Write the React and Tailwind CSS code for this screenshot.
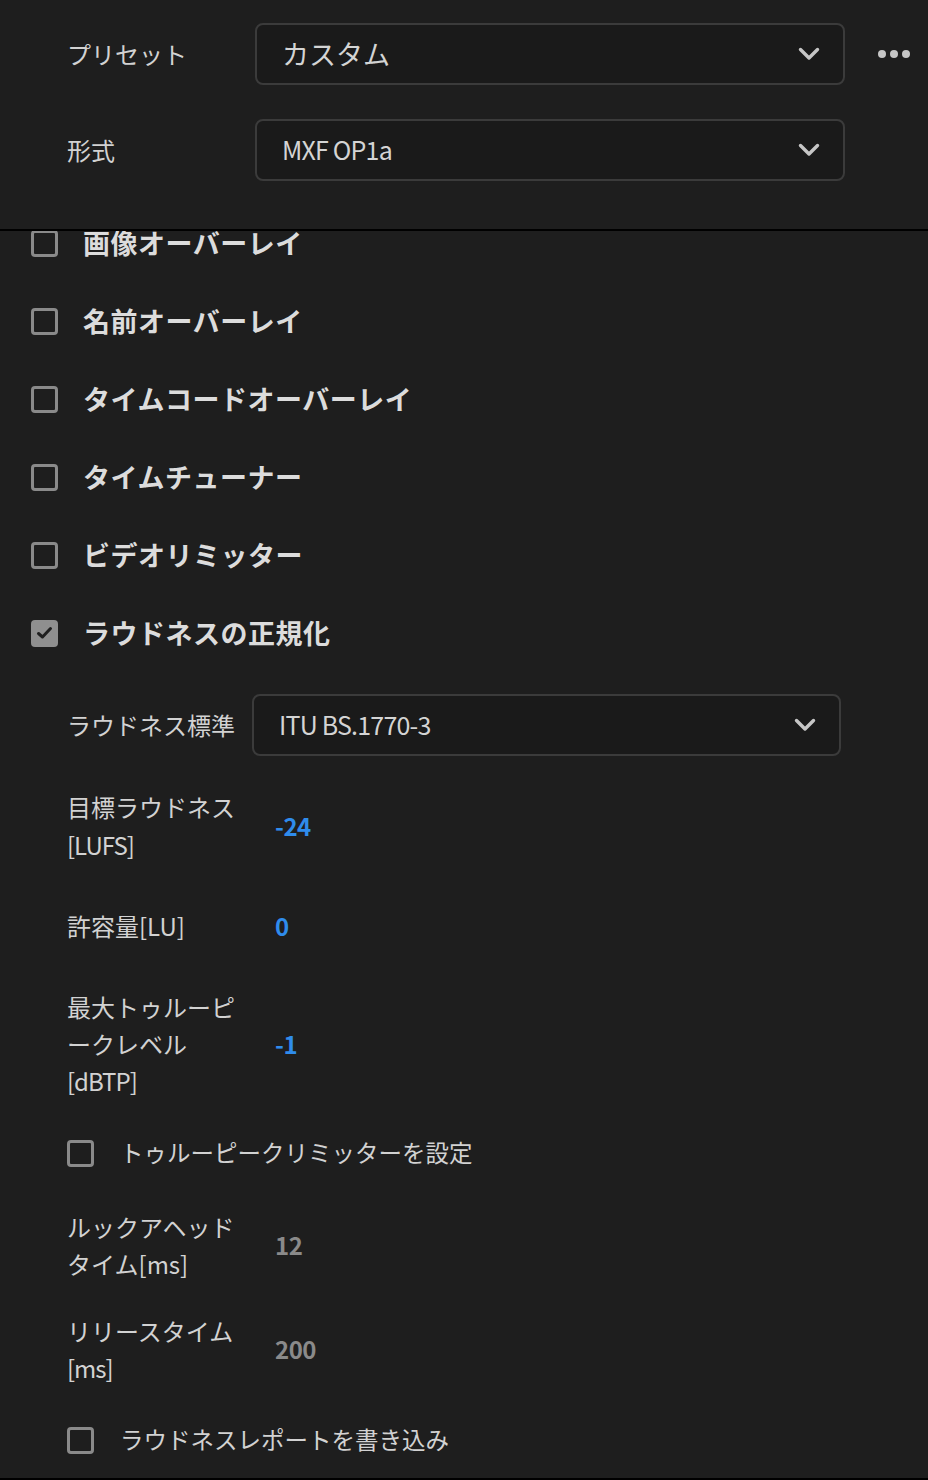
import React from 'react';

const FONT = { fontFamily: '"Noto Sans CJK JP", "Noto Sans", sans-serif' };

const Chevron = () => (
  <svg width="22" height="14" viewBox="0 0 22 14" className="shrink-0">
    <path d="M2.5 2.5 L11 11 L19.5 2.5" fill="none" stroke="#c6c6c6" strokeWidth="3.4" strokeLinecap="round" strokeLinejoin="round" />
  </svg>
);

const Dropdown = ({ value, big }) => (
  <div className="flex-1 h-[62px] flex items-center justify-between pl-[25px] pr-[23px] bg-[#1a1a1a] border-2 border-[#3b3b3b] rounded-[8px]">
    <span className={big ? 'text-[27px] text-[#d4d4d4]' : 'text-[25px] text-[#d4d4d4] tracking-[-0.8px]'}>{value}</span>
    <Chevron />
  </div>
);

const Box = ({ checked }) =>
  checked ? (
    <div className="w-[27px] h-[27px] shrink-0 rounded-[4px] bg-[#8f8f8f] flex items-center justify-center">
      <svg width="17" height="14" viewBox="0 0 17 14">
        <path d="M2.5 7.5 L6.5 11 L14.5 2.5" fill="none" stroke="#1f1f1f" strokeWidth="3" strokeLinecap="round" strokeLinejoin="round" />
      </svg>
    </div>
  ) : (
    <div className="w-[27px] h-[27px] shrink-0 rounded-[4px] border-[3px] border-[#8a8a8a]" />
  );

const MainCheck = ({ label, checked }) => (
  <div className="h-[78px] flex items-center pl-[31px]">
    <Box checked={checked} />
    <span className="ml-[25px] text-[27px] font-bold text-[#dcdcdc] tracking-[0.5px]">{label}</span>
  </div>
);

const SubCheck = ({ label, className }) => (
  <div className={`h-[38px] flex items-center ${className}`}>
    <Box />
    <span className="ml-[26px] text-[23.5px] text-[#d2d2d2]">{label}</span>
  </div>
);

const Field = ({ lines, value, blue, className, lh }) => (
  <div className={`flex items-center ${className}`}>
    <div className={`w-[185px] shrink-0 text-[24px] text-[#d2d2d2] ${lh}`}>
      {lines.map((l) => (
        <div key={l} className={l.startsWith('[') ? 'tracking-[-1px]' : ''}>
          {l}
        </div>
      ))}
    </div>
    <span className={`pl-[23px] text-[24px] font-bold tracking-[-0.5px] ${blue ? 'text-[#2f8cec]' : 'text-[#8a8a8a]'}`}>{value}</span>
  </div>
);

export default function App() {
  return (
    <div className="w-full h-[1480px] bg-[#1e1e1e] flex flex-col overflow-hidden" style={FONT}>
      {/* header */}
      <div className="h-[231px] shrink-0 border-b-2 border-black pt-[23px] pl-[67px] flex flex-col gap-[34px]">
        <div className="flex items-center">
          <span className="w-[188px] shrink-0 text-[24px] text-[#d2d2d2]">プリセット</span>
          <div className="w-[590px] flex">
            <Dropdown value="カスタム" big />
          </div>
          <div className="ml-[33px] flex gap-[4px]">
            <span className="w-[8px] h-[8px] rounded-full bg-[#c6c6c6]" />
            <span className="w-[8px] h-[8px] rounded-full bg-[#c6c6c6]" />
            <span className="w-[8px] h-[8px] rounded-full bg-[#c6c6c6]" />
          </div>
        </div>
        <div className="flex items-center">
          <span className="w-[188px] shrink-0 text-[24px] text-[#d2d2d2]">形式</span>
          <div className="w-[590px] flex">
            <Dropdown value="MXF OP1a" />
          </div>
        </div>
      </div>

      {/* scroll area */}
      <div className="flex-1 overflow-hidden border-b-2 border-black">
        <div className="-mt-[27px]">
          <MainCheck label="画像オーバーレイ" />
          <MainCheck label="名前オーバーレイ" />
          <MainCheck label="タイムコードオーバーレイ" />
          <MainCheck label="タイムチューナー" />
          <MainCheck label="ビデオリミッター" />
          <MainCheck label="ラウドネスの正規化" checked />

          <div className="pl-[67px] pr-[87px] flex flex-col">
            <div className="mt-[22px] flex items-center">
              <span className="w-[185px] shrink-0 text-[24px] text-[#d2d2d2]">ラウドネス標準</span>
              <Dropdown value="ITU BS.1770-3" />
            </div>
            <Field className="mt-[32px]" lh="leading-[38px]" lines={['目標ラウドネス', '[LUFS]']} value="-24" blue />
            <Field className="mt-[43px]" lh="leading-[38px]" lines={['許容量[LU]']} value="0" blue />
            <Field className="mt-[43px]" lh="leading-[37px]" lines={['最大トゥルーピ', 'ークレベル', '[dBTP]']} value="-1" blue />
            <SubCheck className="mt-[35px]" label="トゥルーピークリミッターを設定" />
            <Field className="mt-[36px]" lh="leading-[37px]" lines={['ルックアヘッド', 'タイム[ms]']} value="12" />
            <Field className="mt-[30px]" lh="leading-[37px]" lines={['リリースタイム', '[ms]']} value="200" />
            <SubCheck className="mt-[35px]" label="ラウドネスレポートを書き込み" />
          </div>
        </div>
      </div>
    </div>
  );
}
